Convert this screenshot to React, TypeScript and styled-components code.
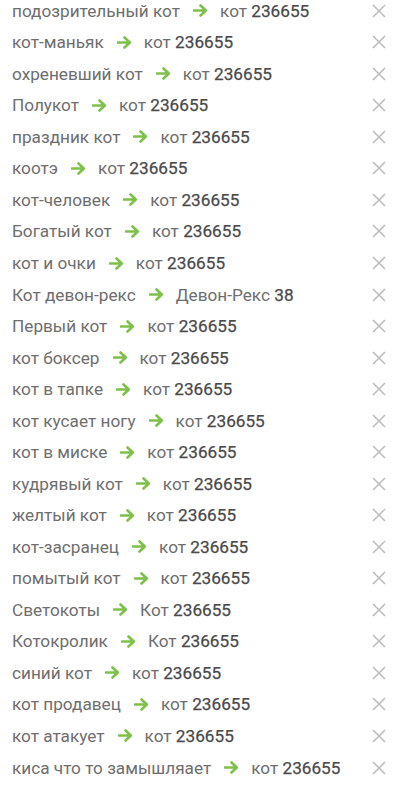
import styled, { createGlobalStyle } from "styled-components";

const GlobalStyle = createGlobalStyle`
    body {
        margin: 0;
        background: #ffffff;
        font-family: Roboto, "Noto Sans", sans-serif;
    }
`;

const StyledList = styled.ul`
    list-style: none;
    margin: -5px 0 0 0;
    padding: 0;
`;

const StyledRow = styled.li`
    display: flex;
    align-items: center;
    justify-content: space-between;
    height: 31.54px;
    padding: 0 13px 0 12px;
`;

const StyledLabel = styled.div`
    display: flex;
    align-items: center;
    font-size: 17.2px;
    color: #6e6e6e;
    white-space: nowrap;
`;

const StyledArrow = styled.svg`
    width: 15px;
    height: 13px;
    margin: 0 12px 0 13px;
`;

const StyledNumber = styled.span`
    color: #4a4a4a;
    -webkit-text-stroke: 0.25px #4a4a4a;
`;

const StyledClose = styled.button`
    display: flex;
    align-items: center;
    justify-content: center;
    width: 16px;
    height: 16px;
    padding: 0;
    border: none;
    background: none;
    cursor: pointer;
`;

const items: [string, string, string][] = [
    ["подозрительный кот", "кот", "236655"],
    ["кот-маньяк", "кот", "236655"],
    ["охреневший кот", "кот", "236655"],
    ["Полукот", "кот", "236655"],
    ["праздник кот", "кот", "236655"],
    ["коотэ", "кот", "236655"],
    ["кот-человек", "кот", "236655"],
    ["Богатый кот", "кот", "236655"],
    ["кот и очки", "кот", "236655"],
    ["Кот девон-рекс", "Девон-Рекс", "38"],
    ["Первый кот", "кот", "236655"],
    ["кот боксер", "кот", "236655"],
    ["кот в тапке", "кот", "236655"],
    ["кот кусает ногу", "кот", "236655"],
    ["кот в миске", "кот", "236655"],
    ["кудрявый кот", "кот", "236655"],
    ["желтый кот", "кот", "236655"],
    ["кот-засранец", "кот", "236655"],
    ["помытый кот", "кот", "236655"],
    ["Светокоты", "Кот", "236655"],
    ["Котокролик", "Кот", "236655"],
    ["синий кот", "кот", "236655"],
    ["кот продавец", "кот", "236655"],
    ["кот атакует", "кот", "236655"],
    ["киса что то замышляает", "кот", "236655"],
];

function Arrow() {
    return (
        <StyledArrow viewBox="0 0 15 13">
            <path d="M1 6.5H12.5M7.5 1.5L12.8 6.5L7.5 11.5" fill="none" stroke="#7dc04a" strokeWidth="2.6" strokeLinecap="round" strokeLinejoin="round" />
        </StyledArrow>
    );
}

export default function App() {
    return (
        <>
            <GlobalStyle />
            <StyledList>
                {items.map(([name, breed, num], i) => (
                    <StyledRow key={i}>
                        <StyledLabel>
                            {name}
                            <Arrow />
                            {breed}&nbsp;<StyledNumber>{num}</StyledNumber>
                        </StyledLabel>
                        <StyledClose aria-label="удалить">
                            <svg width="14" height="14" viewBox="0 0 14 14">
                                <path d="M1 1L13 13M13 1L1 13" stroke="#bdbdbd" strokeWidth="1.6" />
                            </svg>
                        </StyledClose>
                    </StyledRow>
                ))}
            </StyledList>
        </>
    );
}
